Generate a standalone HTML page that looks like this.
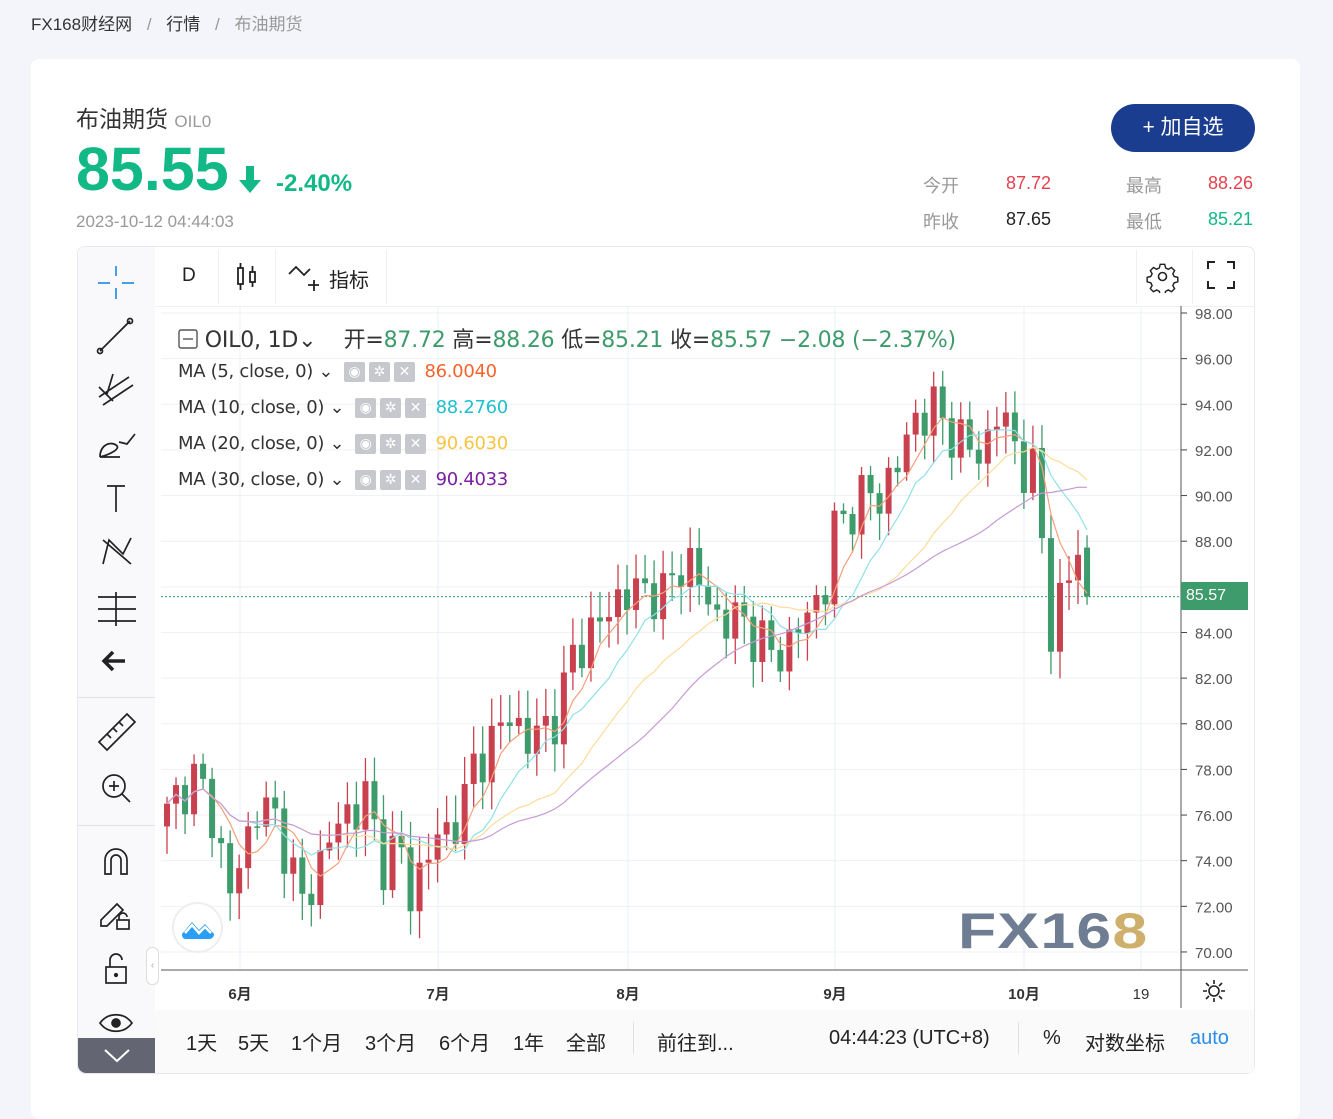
<!DOCTYPE html>
<html><head><meta charset="utf-8"><style>
*{box-sizing:border-box;margin:0;padding:0}
body{width:1333px;height:1090px;background:#f4f5fa;font-family:"Liberation Sans","Noto Sans CJK SC",sans-serif;position:relative;overflow:hidden;color:#333}
.a{position:absolute}
.card{left:31px;top:59px;width:1269px;height:1060px;background:#fff;border-radius:8px}
.tb{font-size:20px;color:#222}
.ma{font-size:18px;color:#333;left:178px;font-family:"DejaVu Sans","Noto Sans CJK SC",sans-serif;letter-spacing:-0.3px}
.ic{display:inline-block;width:21px;height:20px;background:#c6c8cd;margin-right:4px;vertical-align:middle;border-radius:2px;color:#fff;font-size:14px;line-height:20px;text-align:center;font-family:"DejaVu Sans",sans-serif;letter-spacing:0}
.bt{font-size:20px;color:#222;top:1027px}
</style></head><body>
<div class="a" style="left:31px;top:10px;font-size:17px;color:#333">FX168财经网 <span style="color:#999;margin:0 10px">/</span> 行情 <span style="color:#999;margin:0 10px">/</span> <span style="color:#999">布油期货</span></div>
<div class="a card"></div>
<div class="a" style="left:76px;top:100px;font-size:23px;color:#333">布油期货 <span style="font-size:17px;color:#999">OIL0</span></div>
<div class="a" style="left:76px;top:134px;font-size:61px;font-weight:bold;color:#12b886">85.55</div>
<svg class="a" style="left:238px;top:166px" width="24" height="28"><path d="M8 0h8v14h7L12 27 1 14h7z" fill="#12b886"/></svg>
<div class="a" style="left:276px;top:170px;font-size:24px;font-weight:bold;color:#12b886">-2.40%</div>
<div class="a" style="left:76px;top:212px;font-size:17px;color:#999">2023-10-12 04:44:03</div>
<div class="a" style="left:1111px;top:104px;width:144px;height:48px;border-radius:24px;background:#1a3d8f;color:#fff;font-size:21px;text-align:center;line-height:48px">+ 加自选</div>
<div class="a" style="left:923px;top:172px;font-size:18px;color:#999">今开</div>
<div class="a" style="left:1006px;top:173px;font-size:18px;color:#e5414c">87.72</div>
<div class="a" style="left:1126px;top:172px;font-size:18px;color:#999">最高</div>
<div class="a" style="left:1208px;top:173px;font-size:18px;color:#e5414c">88.26</div>
<div class="a" style="left:923px;top:208px;font-size:18px;color:#999">昨收</div>
<div class="a" style="left:1006px;top:209px;font-size:18px;color:#222">87.65</div>
<div class="a" style="left:1126px;top:208px;font-size:18px;color:#999">最低</div>
<div class="a" style="left:1208px;top:209px;font-size:18px;color:#12b886">85.21</div>

<div class="a" style="left:77px;top:246px;width:1178px;height:828px;border:1px solid #e6e8ee;border-radius:8px;background:#fff"></div>
<div class="a" style="left:78px;top:247px;width:77px;height:826px;background:#f9f9fb;border-radius:8px 0 0 8px"></div>
<div class="a" style="left:155px;top:306px;width:1099px;height:1px;background:#eef0f3"></div>
<div class="a" style="left:155px;top:1010px;width:1099px;height:63px;background:#fafafb"></div>
<div class="a" style="left:218px;top:250px;width:1px;height:54px;background:#f0f0f3"></div>
<div class="a" style="left:275px;top:250px;width:1px;height:54px;background:#f0f0f3"></div>
<div class="a" style="left:386px;top:250px;width:1px;height:54px;background:#f0f0f3"></div>
<div class="a" style="left:1136px;top:250px;width:1px;height:54px;background:#f0f0f3"></div>
<div class="a" style="left:1192px;top:250px;width:1px;height:54px;background:#f0f0f3"></div>
<div class="a tb" style="left:182px;top:265px;font-size:19px">D</div>
<svg class="a" style="left:236px;top:262px" width="24" height="30" fill="none" stroke="#222" stroke-width="1.8"><rect x="2" y="6" width="5" height="16"/><path d="M4.5 1v5M4.5 22v6M16.5 4v6M16.5 20v5"/><rect x="14" y="10" width="5" height="10"/></svg>
<svg class="a" style="left:288px;top:264px" width="36" height="28" fill="none" stroke="#222" stroke-width="1.8"><path d="M1 10l7-7 8 8 6-6M26 16v11M20 21h11"/></svg>
<div class="a tb" style="left:329px;top:264px">指标</div>
<svg class="a" style="left:1146px;top:260px" width="33" height="33" fill="none" stroke="#222" stroke-width="1.6"><circle cx="16.5" cy="16.5" r="4"/><path d="M14 3h5l1 4 3 1.5 3.5-2 3.5 3.5-2 3.5 1.5 3 4 1v5l-4 1-1.5 3 2 3.5-3.5 3.5-3.5-2-3 1.5-1 4h-5l-1-4-3-1.5-3.5 2-3.5-3.5 2-3.5-1.5-3-4-1v-5l4-1 1.5-3-2-3.5 3.5-3.5 3.5 2 3-1.5z" transform="scale(.9) translate(1.8 1.8)"/></svg>
<svg class="a" style="left:1206px;top:260px" width="30" height="30" fill="none" stroke="#222" stroke-width="2"><path d="M2 9V2h7M21 2h7v7M28 21v7h-7M9 28H2v-7"/></svg>

<svg class="a" style="left:95px;top:262px" width="600" height="820" fill="none" stroke="#222" stroke-width="1.7">
<path d="M21 4v10M21 26v11M3 21h12M27 21h12" stroke="#2a8ee8"/>
<path d="M5 89l30-30"/><circle cx="5" cy="89" r="2.5"/><circle cx="35" cy="59" r="2.5"/>
<path d="M4 135l30-20M8 143l30-20M4 125l14 14M18 112l-6 20"/>
<path d="M5 195c0-12 10-16 16-12s-8 10-16 12h20M24 180l8 2 8-10"/>
<path d="M12 224h18M21 224v26"/>
<path d="M8 302l6-24 14 14 8-16M8 278l28 24"/>
<path d="M3 335h38M3 347h38M3 359h38M21 330v34"/>
<path d="M30 399H10M18 390l-9 9 9 9" stroke-width="3.5"/>
<path d="M4 480l28-28 8 8-28 28zM12 472l4 4M18 466l4 4M24 460l4 4"/>
<circle cx="19" cy="524" r="11"/><path d="M27 532l8 8M14 524h10M19 519v10"/>
<path d="M10 612v-14a11 11 0 0122 0v14h-6v-14a5 5 0 00-10 0v14z"/>
<path d="M6 658l16-16 6 6-16 16H6z"/><rect x="22" y="658" width="12" height="9"/><path d="M24 658v-3a4 4 0 018 0"/>
<rect x="11" y="705" width="20" height="16"/><path d="M15 705v-7a6 6 0 0112 0"/><circle cx="21" cy="713" r="1.3" fill="#222"/>
<path d="M5 761c8-11 24-11 32 0-8 11-24 11-32 0z"/><circle cx="21" cy="761" r="4" fill="#222"/>
</svg>
<div class="a" style="left:78px;top:697px;width:77px;height:1px;background:#e0e1e6"></div>
<div class="a" style="left:78px;top:825px;width:77px;height:1px;background:#e0e1e6"></div>
<div class="a" style="left:78px;top:1038px;width:77px;height:35px;background:#636672;border-radius:0 0 0 8px"></div>
<svg class="a" style="left:103px;top:1047px" width="28" height="16" fill="none" stroke="#fff" stroke-width="2"><path d="M2 3l12 11 12-11"/></svg>
<div class="a" style="left:146px;top:947px;width:13px;height:38px;border:1px solid #ddd;border-radius:6px;background:#fff;font-size:10px;color:#aaa;text-align:center;line-height:36px">‹</div>

<svg class="a" id="ch" style="left:0;top:0" width="1333" height="1090"></svg>

<div class="a" style="left:178px;top:322px;font-size:22px;color:#333;font-family:'DejaVu Sans','Noto Sans CJK SC',sans-serif;letter-spacing:-0.2px"><svg width="20" height="20" style="vertical-align:-2px" fill="none" stroke="#555" stroke-width="1.4"><rect x="1" y="1" width="18" height="18" rx="2"/><path d="M5 10h10"/></svg> OIL0, 1D⌄ &nbsp;&nbsp;&nbsp;开=<span style="color:#3e9b6b">87.72</span> 高=<span style="color:#3e9b6b">88.26</span> 低=<span style="color:#3e9b6b">85.21</span> 收=<span style="color:#3e9b6b">85.57</span> <span style="color:#3e9b6b">−2.08 (−2.37%)</span></div>
<div class="a ma" style="top:361px">MA (5, close, 0) ⌄ &nbsp;<span class="ic">◉</span><span class="ic">✲</span><span class="ic">✕</span> <span style="color:#f5642c">86.0040</span></div>
<div class="a ma" style="top:397px">MA (10, close, 0) ⌄ &nbsp;<span class="ic">◉</span><span class="ic">✲</span><span class="ic">✕</span> <span style="color:#1ec0d0">88.2760</span></div>
<div class="a ma" style="top:433px">MA (20, close, 0) ⌄ &nbsp;<span class="ic">◉</span><span class="ic">✲</span><span class="ic">✕</span> <span style="color:#f7c542">90.6030</span></div>
<div class="a ma" style="top:469px">MA (30, close, 0) ⌄ &nbsp;<span class="ic">◉</span><span class="ic">✲</span><span class="ic">✕</span> <span style="color:#7b1fa2">90.4033</span></div>

<div class="a" style="left:172px;top:902px;width:51px;height:51px;border-radius:50%;border:2px solid #eee;background:#fff"></div>
<svg class="a" style="left:180px;top:914px" width="36" height="26"><path d="M2 20l10-12 7 8 6-6 9 10c0 3-2 5-5 5H6c-3 0-4-2-4-5z" fill="#2a9df4"/><path d="M5 19l7-8 7 8 6-6 6 6" stroke="#fff" stroke-width="2.5" fill="none"/></svg>
<div class="a" style="left:958px;top:902px;font-size:50px;font-weight:bold;color:#5f6f86;opacity:.9;letter-spacing:1px;transform:scaleX(1.25);transform-origin:left">FX16<span style="color:#c9a75c">8</span></div>

<div class="a" style="left:1181px;top:582px;width:67px;height:28px;background:#3e9b6b;color:#fff;font-size:16px;line-height:28px;padding-left:5px">85.57</div>
<svg class="a" style="left:1202px;top:979px" width="24" height="24" fill="none" stroke="#222" stroke-width="1.6"><circle cx="12" cy="12" r="5"/><path d="M12 1v4M12 19v4M1 12h4M19 12h4M4 4l3 3M17 17l3 3M4 20l3-3M17 7l3-3"/></svg>

<div class="a bt" style="left:186px">1天</div>
<div class="a bt" style="left:238px">5天</div>
<div class="a bt" style="left:291px">1个月</div>
<div class="a bt" style="left:365px">3个月</div>
<div class="a bt" style="left:439px">6个月</div>
<div class="a bt" style="left:513px">1年</div>
<div class="a bt" style="left:566px">全部</div>
<div class="a" style="left:633px;top:1022px;width:1px;height:32px;background:#e0e0e4"></div>
<div class="a bt" style="left:657px">前往到...</div>
<div class="a bt" style="left:829px">04:44:23 (UTC+8)</div>
<div class="a" style="left:1018px;top:1022px;width:1px;height:32px;background:#e0e0e4"></div>
<div class="a bt" style="left:1043px">%</div>
<div class="a bt" style="left:1085px">对数坐标</div>
<div class="a bt" style="left:1190px;color:#2a8ee8">auto</div>

<script>
var s='',Y=function(p){return 313+(98-p)*22.82};
for(var p=98;p>=70;p-=2){var y=Y(p);s+='<line x1="161" x2="1181" y1="'+y+'" y2="'+y+'" stroke="#eef1f5"/>';s+='<line x1="1181" x2="1187" y1="'+y+'" y2="'+y+'" stroke="#444"/>';if(p!=86)s+='<text x="1195" y="'+(y+6)+'" font-size="15" fill="#555" font-family="Liberation Sans">'+p.toFixed(2)+'</text>';}
[['6月',240],['7月',438],['8月',628],['9月',835],['10月',1024],['19',1141]].forEach(function(m){s+='<line x1="'+m[1]+'" x2="'+m[1]+'" y1="306" y2="970" stroke="#e8f1f8"/>';s+='<text x="'+m[1]+'" y="999" text-anchor="middle" font-size="15" font-weight="'+(m[0]=='19'?'normal':'bold')+'" fill="#333" font-family="Liberation Sans,Noto Sans CJK SC">'+m[0]+'</text>';});
s+='<line x1="161" x2="1248" y1="970" y2="970" stroke="#555"/><line x1="1181" x2="1181" y1="306" y2="1008" stroke="#555"/>';
s+='<line x1="161" x2="1181" y1="'+Y(85.57)+'" y2="'+Y(85.57)+'" stroke="#3e9b6b" stroke-dasharray="2,2"/>';
var k=[[167,76],[190,77.8],[210,76.5],[230,72.5],[258,76.5],[280,75.5],[302,72],[330,75],[345,76],[368,76.8],[380,74],[400,74.5],[410,72.5],[430,74.5],[450,75.5],[465,76.5],[475,78.5],[490,79],[510,80.5],[530,79],[545,80],[560,80.5],[575,83.5],[595,84],[615,85.5],[635,85.7],[650,86],[665,85.5],[685,87.5],[700,86],[720,84.5],[745,84.5],[770,83],[790,83.5],[810,85],[825,86],[835,88.5],[850,89.5],[868,90],[880,90],[900,91.5],[915,93.5],[935,93.7],[950,93],[965,92],[985,92],[995,93.5],[1010,93],[1025,91],[1040,90.8],[1045,84],[1055,84.5],[1070,86.5],[1078,87.8],[1087,85.57]];
function interp(x){for(var i=1;i<k.length;i++)if(x<=k[i][0]){var a=k[i-1],b=k[i],t=(x-a[0])/(b[0]-a[0]);return a[1]+(b[1]-a[1])*t;}return 85.57;}
var C=[],X=[],n=0,prev=75.5;
for(var x=167;x<=1088;x+=9.02){var c=interp(x)+Math.sin(n*2.3)*0.9+Math.cos(n*1.7)*0.5;if(x>1080)c=85.57;C.push(c);X.push(x);
var o=prev,hi=Math.max(o,c)+0.3+Math.abs(Math.sin(n*3.1))*0.9,lo=Math.min(o,c)-0.3-Math.abs(Math.cos(n*2.7))*0.9;
if(x>1080){o=87.72;hi=88.26;lo=85.21;}
var col=c>=o?'#c9414f':'#3e9b6b';
s+='<line x1="'+x+'" x2="'+x+'" y1="'+Y(hi)+'" y2="'+Y(lo)+'" stroke="'+col+'" stroke-width="1.3"/>';
var t=Y(Math.max(o,c)),h=Math.max(1.5,Math.abs(Y(o)-Y(c)));s+='<rect x="'+(x-3)+'" y="'+t+'" width="6" height="'+h+'" fill="'+col+'"/>';prev=c;n++;}
[[5,'#f5a07a'],[10,'#8fe0e8'],[20,'#fbdc9a'],[30,'#c79ad6']].forEach(function(m){var d='';for(var i=0;i<C.length;i++){var st=Math.max(0,i-m[0]+1),sm=0;for(var j=st;j<=i;j++)sm+=C[j];var v=sm/(i-st+1);d+=(i?'L':'M')+X[i].toFixed(1)+' '+Y(v).toFixed(1);}s+='<path d="'+d+'" fill="none" stroke="'+m[1]+'" stroke-width="1.2"/>';});
document.getElementById('ch').innerHTML=s;
</script>
</body></html>
